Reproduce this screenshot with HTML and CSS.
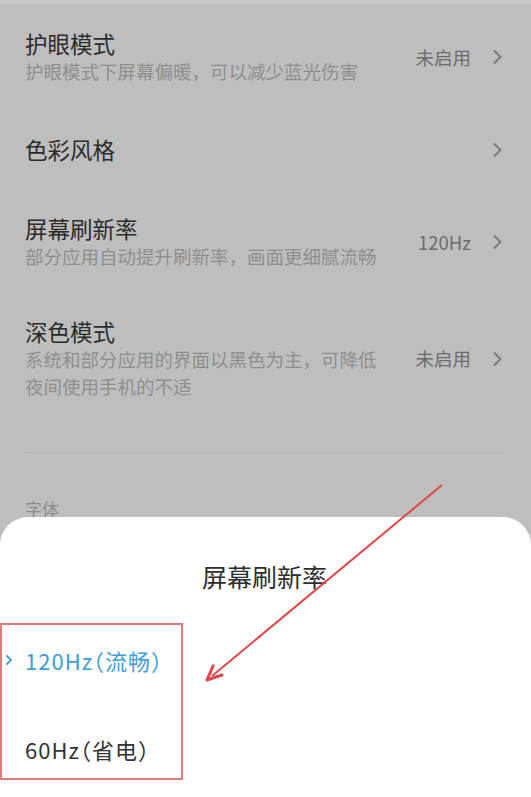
FILE: index.html
```html
<!DOCTYPE html>
<html lang="zh-CN">
<head>
<meta charset="utf-8">
<link rel="stylesheet" href="styles.css">
</head>
<body>
<div class="screen">
  <div class="topband"></div>
  <div class="list">
    <div class="row">
      <div class="texts">
        <div class="title">护眼模式</div>
        <div class="sub">护眼模式下屏幕偏暖，可以减少蓝光伤害</div>
      </div>
      <div class="value">未启用</div>
      <svg class="chev" viewBox="0 0 10 16"><path d="M2 1.5 L8.5 8 L2 14.5" /></svg>
    </div>
    <div class="row">
      <div class="texts">
        <div class="title">色彩风格</div>
      </div>
      <svg class="chev" viewBox="0 0 10 16"><path d="M2 1.5 L8.5 8 L2 14.5" /></svg>
    </div>
    <div class="row row-tight">
      <div class="texts">
        <div class="title">屏幕刷新率</div>
        <div class="sub">部分应用自动提升刷新率，画面更细腻流畅</div>
      </div>
      <div class="value">120Hz</div>
      <svg class="chev" viewBox="0 0 10 16"><path d="M2 1.5 L8.5 8 L2 14.5" /></svg>
    </div>
    <div class="row row-last">
      <div class="texts">
        <div class="title">深色模式</div>
        <div class="sub">系统和部分应用的界面以黑色为主，可降低<br>夜间使用手机的不适</div>
      </div>
      <div class="value">未启用</div>
      <svg class="chev" viewBox="0 0 10 16"><path d="M2 1.5 L8.5 8 L2 14.5" /></svg>
    </div>
    <div class="divider"></div>
    <div class="section">字体</div>
  </div>

  <div class="sheet">
    <div class="sheet-title">屏幕刷新率</div>
    <div class="opt opt-active">
      <svg class="opt-chev" viewBox="0 0 8 12"><path d="M1.5 1.5 L6 6 L1.5 10.5" /></svg>
      <span>120Hz（流畅）</span>
    </div>
    <div class="opt">
      <span>60Hz（省电）</span>
    </div>
  </div>

  <div class="mark-box"></div>
  <svg class="arrow" viewBox="0 0 531 797">
    <path d="M442 485 L212 676" class="arrow-line" />
    <path d="M207 680 L213 666 M207 680 L222 675" class="arrow-head" />
  </svg>
</div>
</body>
</html>
```

FILE: styles.css
```css
* { box-sizing: border-box; }
html, body {
  margin: 0;
  padding: 0;
  width: 531px;
  height: 797px;
  overflow: hidden;
}
body {
  font-family: "Noto Sans CJK SC", "Noto Sans", sans-serif;
  background: #bebebe;
}
.screen {
  position: relative;
  width: 531px;
  height: 797px;
  background: #bebebe;
}
.topband {
  height: 4px;
  background: #c9c9c9;
}
.list {
  padding: 0 0 0 25px;
}
.row {
  display: flex;
  align-items: center;
  padding: 25px 29px 25px 0;
}
.row-tight { padding-bottom: 22px; }
.row-last { padding-bottom: 22px; }
.texts {
  flex: 1;
}
.title {
  font-size: 22.5px;
  line-height: 29px;
  color: #2b2b2b;
}
.sub {
  font-size: 18.5px;
  line-height: 27px;
  color: #8e8e8e;
}
.value {
  font-size: 18.5px;
  line-height: 27px;
  color: #6c6c6c;
  margin-right: 21px;
}
.chev {
  width: 10px;
  height: 16px;
  fill: none;
  stroke: #7a7a7a;
  stroke-width: 2;
}
.divider {
  height: 1px;
  background: #b3b3b3;
  margin: 30px 26px 0 0;
}
.section {
  margin-top: 44px;
  font-size: 17px;
  line-height: 24px;
  color: #8c8c8c;
}
.sheet {
  position: absolute;
  left: 0;
  right: 0;
  top: 517px;
  bottom: 0;
  background: #ffffff;
  border-radius: 28px 28px 0 0;
  padding-top: 42px;
}
.sheet-title {
  text-align: center;
  font-size: 25px;
  line-height: 34px;
  color: #2e2e2e;
  padding-right: 2px;
}
.opt {
  position: relative;
  display: flex;
  align-items: center;
  padding-left: 25px;
  font-size: 22px;
  line-height: 30px;
  color: #333333;
  font-feature-settings: "halt";
  letter-spacing: 1px;
}
.opt-active {
  margin-top: 52px;
  color: #3f9ed8;
}
.opt + .opt { margin-top: 59px; }
.opt-chev {
  position: absolute;
  left: 5px;
  top: 9px;
  width: 8px;
  height: 12px;
  fill: none;
  stroke: #3f9ed8;
  stroke-width: 1.8;
}
.mark-box {
  position: absolute;
  left: 0;
  top: 623px;
  width: 183px;
  height: 157px;
  border: 2px solid #e17c7c;
}
.arrow {
  position: absolute;
  left: 0;
  top: 0;
  width: 531px;
  height: 797px;
  pointer-events: none;
}
.arrow-line {
  stroke: #e04848;
  stroke-width: 2;
  fill: none;
}
.arrow-head {
  stroke: #e04848;
  stroke-width: 3;
  fill: none;
  stroke-linecap: round;
}
```
